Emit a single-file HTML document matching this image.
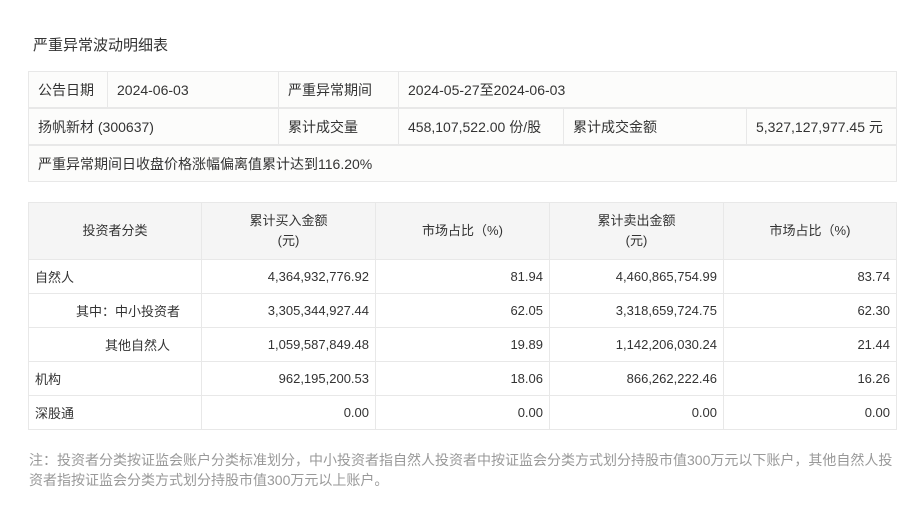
<!DOCTYPE html>
<html><head><meta charset="utf-8"><style>
body{margin:0;width:920px;height:506px;background:#fff;font-family:"Liberation Sans","Noto Sans CJK SC",sans-serif;color:#333;position:relative;overflow:hidden}
.c{position:absolute;box-sizing:border-box;border:1px solid #e8e8e8;display:flex;align-items:center;padding:0 9px;font-size:14px;background:#fcfcfb;margin:-1px 0 0 -1px}
.b{position:absolute;box-sizing:border-box;border:1px solid #e8e8e8;display:flex;align-items:center;font-size:13px;background:#fff;margin:-1px 0 0 -1px;padding:0 6px}
.h{background:#f5f5f5;justify-content:center;text-align:center;line-height:20px}
.r{justify-content:flex-end}
</style></head><body>
<div style="position:absolute;left:33px;top:34px;font-size:15px">严重异常波动明细表</div>

<div class="c" style="left:29px;top:72px;width:80px;height:37px">公告日期</div>
<div class="c" style="left:108px;top:72px;width:172px;height:37px">2024-06-03</div>
<div class="c" style="left:279px;top:72px;width:121px;height:37px">严重异常期间</div>
<div class="c" style="left:399px;top:72px;width:499px;height:37px">2024-05-27至2024-06-03</div>
<div class="c" style="left:29px;top:109px;width:251px;height:37px">扬帆新材 (300637)</div>
<div class="c" style="left:279px;top:109px;width:121px;height:37px">累计成交量</div>
<div class="c" style="left:399px;top:109px;width:166px;height:37px">458,107,522.00 份/股</div>
<div class="c" style="left:564px;top:109px;width:184px;height:37px">累计成交金额</div>
<div class="c" style="left:747px;top:109px;width:151px;height:37px">5,327,127,977.45 元</div>
<div class="c" style="left:29px;top:146px;width:869px;height:37px">严重异常期间日收盘价格涨幅偏离值累计达到116.20%</div>

<div class="b h" style="left:29px;top:203px;width:174px;height:58px">投资者分类</div>
<div class="b h" style="left:202px;top:203px;width:175px;height:58px">累计买入金额<br>(元)</div>
<div class="b h" style="left:376px;top:203px;width:175px;height:58px">市场占比（%)</div>
<div class="b h" style="left:550px;top:203px;width:175px;height:58px">累计卖出金额<br>(元)</div>
<div class="b h" style="left:724px;top:203px;width:174px;height:58px">市场占比（%)</div>

<div class="b" style="left:29px;top:260px;width:174px;height:35px">自然人</div>
<div class="b r" style="left:202px;top:260px;width:175px;height:35px">4,364,932,776.92</div>
<div class="b r" style="left:376px;top:260px;width:175px;height:35px">81.94</div>
<div class="b r" style="left:550px;top:260px;width:175px;height:35px">4,460,865,754.99</div>
<div class="b r" style="left:724px;top:260px;width:174px;height:35px">83.74</div>

<div class="b" style="left:29px;top:294px;width:174px;height:35px;padding-left:47px">其中：中小投资者</div>
<div class="b r" style="left:202px;top:294px;width:175px;height:35px">3,305,344,927.44</div>
<div class="b r" style="left:376px;top:294px;width:175px;height:35px">62.05</div>
<div class="b r" style="left:550px;top:294px;width:175px;height:35px">3,318,659,724.75</div>
<div class="b r" style="left:724px;top:294px;width:174px;height:35px">62.30</div>

<div class="b" style="left:29px;top:328px;width:174px;height:35px;padding-left:76px">其他自然人</div>
<div class="b r" style="left:202px;top:328px;width:175px;height:35px">1,059,587,849.48</div>
<div class="b r" style="left:376px;top:328px;width:175px;height:35px">19.89</div>
<div class="b r" style="left:550px;top:328px;width:175px;height:35px">1,142,206,030.24</div>
<div class="b r" style="left:724px;top:328px;width:174px;height:35px">21.44</div>

<div class="b" style="left:29px;top:362px;width:174px;height:35px">机构</div>
<div class="b r" style="left:202px;top:362px;width:175px;height:35px">962,195,200.53</div>
<div class="b r" style="left:376px;top:362px;width:175px;height:35px">18.06</div>
<div class="b r" style="left:550px;top:362px;width:175px;height:35px">866,262,222.46</div>
<div class="b r" style="left:724px;top:362px;width:174px;height:35px">16.26</div>

<div class="b" style="left:29px;top:396px;width:174px;height:35px">深股通</div>
<div class="b r" style="left:202px;top:396px;width:175px;height:35px">0.00</div>
<div class="b r" style="left:376px;top:396px;width:175px;height:35px">0.00</div>
<div class="b r" style="left:550px;top:396px;width:175px;height:35px">0.00</div>
<div class="b r" style="left:724px;top:396px;width:174px;height:35px">0.00</div>

<div style="position:absolute;left:29px;top:450px;width:870px;font-size:14px;line-height:20px;color:#999">注：投资者分类按证监会账户分类标准划分，中小投资者指自然人投资者中按证监会分类方式划分持股市值300万元以下账户，其他自然人投资者指按证监会分类方式划分持股市值300万元以上账户。</div>
</body></html>
